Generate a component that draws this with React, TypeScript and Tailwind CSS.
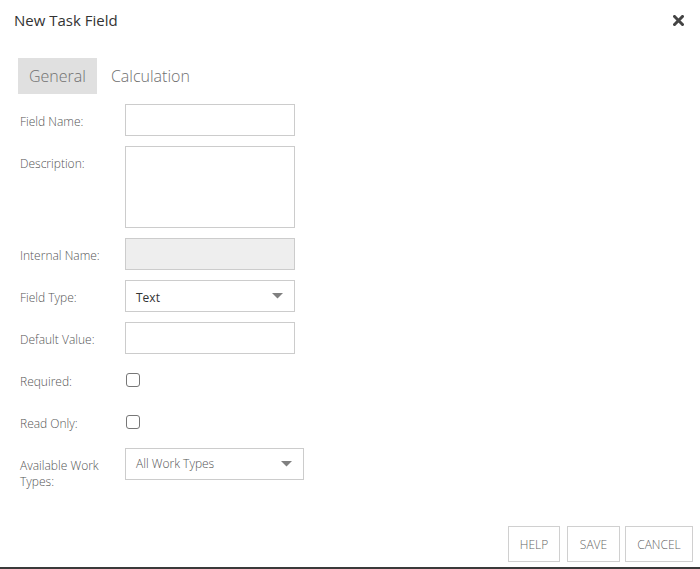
import React, { useState } from "react";

const font = { fontFamily: '"Open Sans", "Liberation Sans", sans-serif' };

function Caret() {
  return (
    <svg width="11" height="6" viewBox="0 0 11 6" className="shrink-0">
      <path d="M0 0h11L5.5 5.5z" fill="#808080" />
    </svg>
  );
}

function Row({ label, children, top = false }: { label: string; children: React.ReactNode; top?: boolean }) {
  return (
    <div className={top ? "flex items-start" : "flex items-center"}>
      <label
        className={
          "w-[105px] shrink-0 pr-[15px] text-[12px] leading-[16px] font-light text-[#555] " +
          (top ? "pt-[10px]" : "pt-[3px]")
        }
      >
        {label}
      </label>
      {children}
    </div>
  );
}

export default function App() {
  const [tab, setTab] = useState("General");
  return (
    <div style={font} className="h-[569px] bg-white border-b-2 border-[#3a3a3a] flex flex-col">
      <div className="flex items-center justify-between h-[40px] pl-[14px] pr-[16px]">
        <h1 className="text-[15px] text-[#333]">New Task Field</h1>
        <svg width="11" height="11" viewBox="0 0 11 11">
          <path d="M1.5 1.5l8 8M9.5 1.5l-8 8" stroke="#444" strokeWidth="3" strokeLinecap="square" />
        </svg>
      </div>

      <div className="flex pl-[18px] mt-[18px]">
        {["General", "Calculation"].map((t) => (
          <button
            key={t}
            onClick={() => setTab(t)}
            className={
              "h-[36px] text-[16px] font-light text-[#707070] " +
              (tab === t ? "bg-[#e0e0e0] px-[11px]" : "bg-transparent px-[14px]")
            }
          >
            {t}
          </button>
        ))}
      </div>

      <div className="flex flex-col gap-[10px] pl-[20px] mt-[10px]">
        <Row label="Field Name:">
          <input className="w-[170px] h-[32px] border border-[#ccc] outline-none" />
        </Row>
        <Row label="Description:" top>
          <textarea className="w-[170px] h-[82px] border border-[#ccc] outline-none resize-none" />
        </Row>
        <Row label="Internal Name:">
          <input disabled className="w-[170px] h-[32px] border border-[#ccc] bg-[#eeeeee]" />
        </Row>
        <Row label="Field Type:">
          <div className="w-[170px] h-[32px] border border-[#ccc] flex items-center justify-between pl-[10px] pr-[11px] text-[12px] text-[#333]">
            <span className="pt-[3px]">Text</span>
            <Caret />
          </div>
        </Row>
        <Row label="Default Value:">
          <input className="w-[170px] h-[32px] border border-[#ccc] outline-none" />
        </Row>
        <Row label="Required:">
          <div className="h-[32px] flex items-center">
            <span className="w-[14px] h-[14px] ml-[1px] border border-[#777] rounded-[3px]" />
          </div>
        </Row>
        <Row label="Read Only:">
          <div className="h-[32px] flex items-center">
            <span className="w-[14px] h-[14px] ml-[1px] border border-[#777] rounded-[3px]" />
          </div>
        </Row>
        <Row label="Available Work Types:" top>
          <div className="w-[179px] h-[32px] border border-[#ccc] flex items-center justify-between pl-[10px] pr-[11px] text-[12px] text-[#555] font-light">
            <span>All Work Types</span>
            <Caret />
          </div>
        </Row>
      </div>

      <div className="mt-auto flex justify-end pr-[7px] pb-[5px]">
        <button className="h-[36px] w-[52px] pt-[2px] border border-[#d0d0d0] text-[12px] font-light text-[#666]">HELP</button>
        <button className="h-[36px] w-[53px] ml-[7px] pt-[2px] border border-[#d0d0d0] text-[12px] font-light text-[#666]">SAVE</button>
        <button className="h-[36px] w-[68px] ml-[5px] pt-[2px] border border-[#d0d0d0] text-[12px] font-light text-[#666]">CANCEL</button>
      </div>
    </div>
  );
}
